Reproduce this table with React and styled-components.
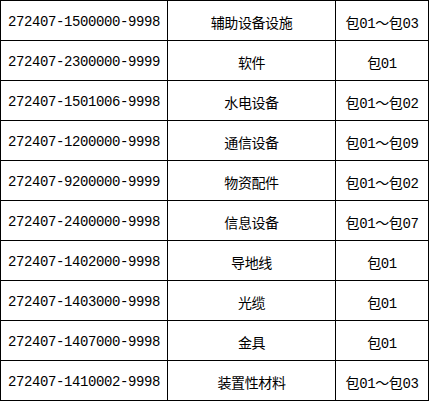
import React from "react";
import styled, { createGlobalStyle } from "styled-components";

const rows = [
  ["272407-1500000-9998", "辅助设备设施", "包01～包03"],
  ["272407-2300000-9999", "软件", "包01"],
  ["272407-1501006-9998", "水电设备", "包01～包02"],
  ["272407-1200000-9998", "通信设备", "包01～包09"],
  ["272407-9200000-9999", "物资配件", "包01～包02"],
  ["272407-2400000-9998", "信息设备", "包01～包07"],
  ["272407-1402000-9998", "导地线", "包01"],
  ["272407-1403000-9998", "光缆", "包01"],
  ["272407-1407000-9998", "金具", "包01"],
  ["272407-1410002-9998", "装置性材料", "包01～包03"],
];

const GlobalStyle = createGlobalStyle`
  html, body {
    margin: 0;
    padding: 0;
    background: #fff;
  }
`;

const Grid = styled.div`
  display: grid;
  grid-template-columns: 167px 168px 93px;
  grid-auto-rows: 40px;
  width: 429px;
  box-sizing: border-box;
  border-left: 1px solid #000;
  border-top: 1px solid #000;
  font-family: "Liberation Mono", "Noto Sans CJK SC", monospace;
  font-size: 14px;
  letter-spacing: -0.4px;
  color: #000;
`;

const Cell = styled.div`
  display: flex;
  align-items: center;
  justify-content: ${(p) => (p.$left ? "flex-start" : "center")};
  padding: 3px 0 0 ${(p) => (p.$left ? "7px" : "0")};
  box-sizing: border-box;
  border-right: 1px solid #000;
  border-bottom: 1px solid #000;
  white-space: nowrap;
`;

export default function App() {
  return (
    <>
      <GlobalStyle />
      <Grid>
        {rows.map((r) => (
          <React.Fragment key={r[0]}>
            <Cell $left>{r[0]}</Cell>
            <Cell>{r[1]}</Cell>
            <Cell>{r[2]}</Cell>
          </React.Fragment>
        ))}
      </Grid>
    </>
  );
}
